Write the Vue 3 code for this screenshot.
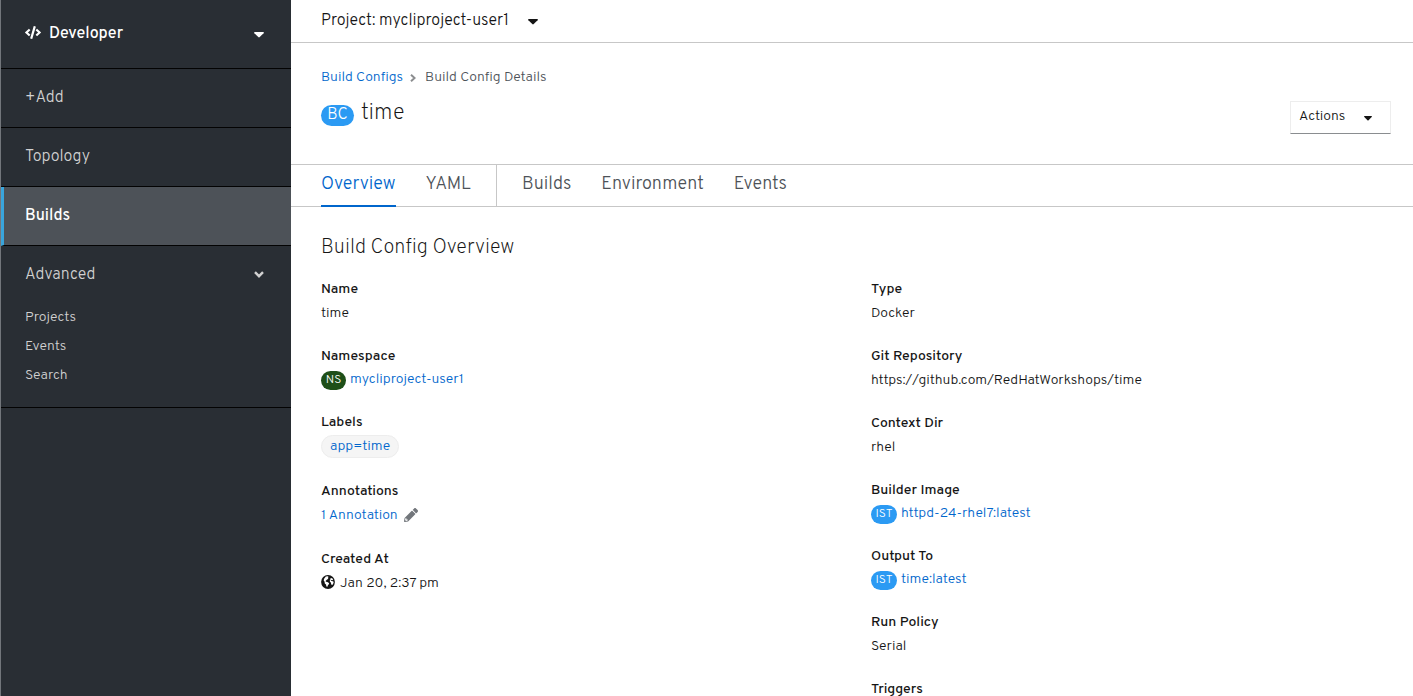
<script setup>
import { ref } from 'vue'

const mainNav = [
  { label: '+Add' },
  { label: 'Topology' },
  { label: 'Builds', active: true },
]
const advancedNav = ['Projects', 'Events', 'Search']
const advancedOpen = ref(true)

const tabs = [
  { label: 'Overview', active: true },
  { label: 'YAML' },
  { label: 'Builds', divided: true },
  { label: 'Environment' },
  { label: 'Events' },
]

const buildDetails = [
  { term: 'Type', text: 'Docker' },
  { term: 'Git Repository', text: 'https://github.com/RedHatWorkshops/time' },
  { term: 'Context Dir', text: 'rhel' },
  { term: 'Builder Image', link: 'httpd-24-rhel7:latest' },
  { term: 'Output To', link: 'time:latest' },
  { term: 'Run Policy', text: 'Serial' },
  { term: 'Triggers' },
]
</script>

<template>
  <div class="app">
    <aside class="sidebar">
      <button class="perspective" type="button">
        <svg class="code-icon" viewBox="0 0 640 512" aria-hidden="true">
          <path d="M278.900 511.500l-61-17.700c-6.400-1.800-10-8.500-8.200-14.900L346.200 8.700c1.800-6.400 8.500-10 14.900-8.200l61 17.700c6.400 1.800 10 8.500 8.200 14.900L293.800 503.300c-1.900 6.400-8.500 10.100-14.900 8.200zm-114-112.200l43.500-46.400c4.600-4.900 4.300-12.700-.8-17.200L117 256l90.600-79.700c5.100-4.500 5.500-12.300.8-17.200l-43.500-46.400c-4.500-4.800-12.100-5.100-17-.5L3.800 247.200c-5.100 4.700-5.100 12.800 0 17.500l144.100 135.100c4.900 4.600 12.500 4.400 17-.5zm327.200.6l144.100-135.100c5.100-4.700 5.100-12.800 0-17.500L492.100 112.100c-4.800-4.500-12.400-4.300-17 .5L431.600 159c-4.600 4.900-4.300 12.700.8 17.200L523 256l-90.600 79.700c-5.100 4.500-5.500 12.300-.8 17.200l43.500 46.400c4.500 4.900 12.100 5.100 17 .6z" />
        </svg>
        <span>Developer</span>
        <svg class="caret push" viewBox="0 0 10 6" aria-hidden="true"><path d="M.7 0h8.600q1 .3.300 1.200L5.700 5.100q-.7.600-1.400 0L.4 1.200Q-.3.300.7 0z" /></svg>
      </button>
      <nav aria-label="Main">
        <a v-for="item in mainNav" :key="item.label" href="#" class="nav-link" :class="{ active: item.active }">{{ item.label }}</a>
        <section class="nav-group">
          <button class="nav-toggle" type="button" :aria-expanded="advancedOpen" @click="advancedOpen = !advancedOpen">
            <span>Advanced</span>
            <svg class="chevron" viewBox="0 0 10 7" aria-hidden="true"><path d="M1 1.200l4 4 4-4" /></svg>
          </button>
          <div v-if="advancedOpen" class="sub-links">
            <a v-for="name in advancedNav" :key="name" href="#">{{ name }}</a>
          </div>
        </section>
      </nav>
    </aside>

    <main class="page">
      <div class="project-bar">
        <button class="project-toggle" type="button">
          <span>Project: mycliproject-user1</span>
          <svg class="caret" viewBox="0 0 10 6" aria-hidden="true"><path d="M.7 0h8.600q1 .3.300 1.200L5.700 5.100q-.7.600-1.400 0L.4 1.200Q-.3.300.7 0z" /></svg>
        </button>
      </div>

      <header class="page-header">
        <nav class="breadcrumb" aria-label="Breadcrumb">
          <a href="#">Build Configs</a>
          <svg class="separator" viewBox="0 0 6 8" aria-hidden="true"><path d="M1 .8L4.600 4 1 7.200" /></svg>
          <span>Build Config Details</span>
        </nav>
        <div class="title-row">
          <h1><span class="badge large">BC</span>time</h1>
          <button class="actions" type="button">
            <span>Actions</span>
            <svg class="caret small" viewBox="0 0 10 6" aria-hidden="true"><path d="M.7 0h8.600q1 .3.300 1.200L5.700 5.100q-.7.600-1.400 0L.4 1.200Q-.3.300.7 0z" /></svg>
          </button>
        </div>
      </header>

      <nav class="tabs" aria-label="Build config">
        <a v-for="tab in tabs" :key="tab.label" href="#" class="tab" :class="{ active: tab.active, divided: tab.divided }"><span>{{ tab.label }}</span></a>
      </nav>

      <section class="overview">
        <h2>Build Config Overview</h2>
        <div class="columns">
          <dl>
            <div class="field">
              <dt>Name</dt>
              <dd>time</dd>
            </div>
            <div class="field">
              <dt>Namespace</dt>
              <dd class="resource"><span class="badge namespace">NS</span><a href="#">mycliproject-user1</a></dd>
            </div>
            <div class="field">
              <dt>Labels</dt>
              <dd class="labels"><a class="chip" href="#">app=time</a></dd>
            </div>
            <div class="field">
              <dt>Annotations</dt>
              <dd class="with-icon">
                <a class="annotation" href="#">
                  <span>1 Annotation</span>
                  <svg class="pencil" viewBox="0 0 512 512" aria-hidden="true"><path d="M497.900 142.100l-46.100 46.100c-4.700 4.700-12.300 4.700-17 0l-111-111c-4.700-4.700-4.700-12.300 0-17l46.100-46.100c18.700-18.700 49.100-18.700 67.900 0l60.100 60.100c18.800 18.700 18.800 49.100 0 67.900zM284.200 99.800L21.600 362.400.4 483.900c-2.900 16.400 11.400 30.600 27.800 27.800l121.500-21.300 262.600-262.600c4.700-4.700 4.700-12.300 0-17l-111-111c-4.800-4.700-12.400-4.700-17.100 0zM88 424h48v36.300l-64.500 11.300-31.100-31.100L51.700 376H88v48z" /></svg>
                </a>
              </dd>
            </div>
            <div class="field">
              <dt>Created At</dt>
              <dd class="with-icon">
                <svg class="globe" viewBox="0 0 14 14" aria-hidden="true">
                  <circle cx="7" cy="7" r="6.900" />
                  <path d="M4.800 1.500l1.900-.3 1 .8-.8.700.4 1-1.500 1-1.200 1.200.4.800 1.400.4 1.500.8.200 1.100-1.100 1.100-.6 1.700-1-.2-.4-2-1.200-1.200-.2-1.600-.9-1.300.4-1.800zM9.600 3l1.600.2 1 1.500-.9.500-1.100-.3-.6.800 1.300.4 1.500.4.200 1.200-1 2-.9.400-.6-1.300-.2-1.200-.9-.6-.2-1.400.6-1.400z" />
                </svg>
                <span>Jan 20, 2:37 pm</span>
              </dd>
            </div>
          </dl>
          <dl>
            <div v-for="field in buildDetails" :key="field.term" class="field">
              <dt>{{ field.term }}</dt>
              <dd v-if="field.link" class="resource"><span class="badge image">IST</span><a href="#">{{ field.link }}</a></dd>
              <dd v-else>{{ field.text }}</dd>
            </div>
          </dl>
        </div>
      </section>
    </main>
  </div>
</template>

<style>
body {
  margin: 0;
}
</style>

<style scoped>
.app {
  display: flex;
  height: 100vh;
  overflow: hidden;
  box-sizing: border-box;
  border-left: 1px solid #72767b;
  background: #fff;
  color: #151515;
  font: 300 14px/24px Overpass, Roboto, sans-serif;
}
.app * {
  box-sizing: border-box;
}
button {
  border: 0;
  padding: 0;
  background: none;
  color: inherit;
  font: inherit;
  text-align: left;
  cursor: pointer;
}
a {
  color: #0066cc;
  text-decoration: none;
}
h1, h2, dl, dd {
  margin: 0;
}
svg {
  flex: none;
  fill: currentColor;
}

.sidebar {
  flex: 0 0 290px;
  background: #292e34;
  color: #d1d1d1;
  font-size: 16px;
}
.perspective {
  display: flex;
  align-items: center;
  gap: 8px;
  width: 100%;
  height: 69px;
  border-bottom: 1px solid #030303;
  padding: 0 27px 0 24px;
  color: #fff;
  font-weight: 500;
}
.code-icon {
  width: 16px;
  height: 13px;
  margin-bottom: 4px;
}
.caret {
  width: 10px;
  height: 6px;
  margin-top: 2px;
}
.caret.small {
  width: 8px;
  height: 5px;
}
.push {
  margin-left: auto;
}
.nav-link {
  display: flex;
  align-items: center;
  height: 59px;
  padding: 0 24px;
  border-bottom: 1px solid #030303;
  color: #d1d1d1;
}
.nav-link.active {
  padding-left: 21px;
  border-left: 3px solid #39a5dc;
  background: #4d5258;
  color: #fff;
  font-weight: 500;
}
.nav-group {
  padding-bottom: 17px;
  border-bottom: 1px solid #030303;
}
.nav-toggle {
  display: flex;
  align-items: center;
  justify-content: space-between;
  width: 100%;
  height: 57px;
  padding: 0 27px 0 24px;
}
.chevron {
  width: 10px;
  height: 7px;
  margin-bottom: 1px;
  fill: none;
  stroke: currentColor;
  stroke-width: 2.400;
}
.sub-links {
  display: flex;
  flex-direction: column;
}
.sub-links a {
  height: 29px;
  padding: 0 24px;
  color: #d1d1d1;
  font-size: 14px;
  line-height: 29px;
}

.page {
  flex: 1;
  min-width: 0;
  overflow: hidden;
}
.project-bar {
  height: 43px;
  padding: 0 30px;
  border-bottom: 1px solid #c7c7c7;
}
.project-toggle {
  display: flex;
  align-items: center;
  gap: 19px;
  height: 41px;
  font-size: 16px;
}
.page-header {
  padding: 23px 22px 29px 30px;
}
.breadcrumb {
  display: flex;
  align-items: center;
  color: #4d5258;
}
.separator {
  width: 6px;
  height: 8px;
  margin: 0 9px 0 7px;
  fill: none;
  stroke: #8b8d8f;
  stroke-width: 2;
}
.title-row {
  display: flex;
  align-items: flex-start;
  justify-content: space-between;
  height: 45px;
}
h1 {
  display: flex;
  align-items: center;
  gap: 7px;
  font-size: 22px;
  font-weight: 200;
  line-height: 47px;
}
.badge {
  display: inline-flex;
  align-items: center;
  justify-content: center;
  min-width: 25px;
  height: 19px;
  margin-right: 4px;
  padding: 0 4px;
  border-radius: 20px;
  background: #2b9af3;
  color: #fff;
  font-size: 12px;
  font-weight: 300;
  line-height: 20px;
}
.badge.large {
  min-width: 33px;
  height: 21px;
  margin: 3px 0 0;
  font-size: 16px;
  line-height: 21px;
}
.badge.namespace {
  background: #1e4f18;
}
.badge.image {
  min-width: 26px;
}
.actions {
  display: flex;
  align-items: center;
  justify-content: space-between;
  width: 101px;
  height: 33px;
  margin-top: 11px;
  padding: 0 18px 1px 8px;
  border: 1px solid #ededed;
  border-bottom-color: #8a8d90;
}

.tabs {
  display: flex;
  height: 43px;
  padding: 0 15px;
  border-top: 1px solid #c7c7c7;
  border-bottom: 1px solid #c7c7c7;
  font-size: 18px;
}
.tab {
  height: 42px;
  padding: 0 15px;
  color: #4d5258;
}
.tab span {
  display: block;
  height: 42px;
  line-height: 39px;
}
.tab.active {
  color: #0066cc;
}
.tab.active span {
  border-bottom: 2px solid #0066cc;
}
.tab.divided {
  height: 41px;
  margin-left: 10px;
  padding-left: 25px;
  border-left: 1px solid #c7c7c7;
}

.overview {
  padding: 26px 30px 0;
}
h2 {
  margin-bottom: 15px;
  font-size: 20px;
  font-weight: 200;
  line-height: 30px;
}
.columns {
  display: grid;
  grid-template-columns: 1fr 1fr;
  column-gap: 38px;
}
.field {
  margin-bottom: 20px;
}
dt {
  font-weight: 500;
  line-height: 24px;
}
dd {
  display: flex;
  align-items: center;
  height: 23px;
}
.resource {
  height: 22px;
}
.labels {
  height: 25px;
}
.chip {
  height: 23px;
  margin-bottom: 2px;
  padding: 0 8px;
  border: 1px solid #ededed;
  border-radius: 20px;
  background: #f5f5f5;
  line-height: 22px;
}
.with-icon {
  height: 24px;
}
.annotation {
  display: flex;
  align-items: center;
  gap: 6px;
}
.pencil {
  width: 14px;
  height: 14px;
  margin-bottom: 2px;
  color: #72767b;
}
.globe {
  width: 14px;
  height: 14px;
  margin: 0 5px 4px 0;
}
.globe path {
  fill: #fff;
}
</style>
